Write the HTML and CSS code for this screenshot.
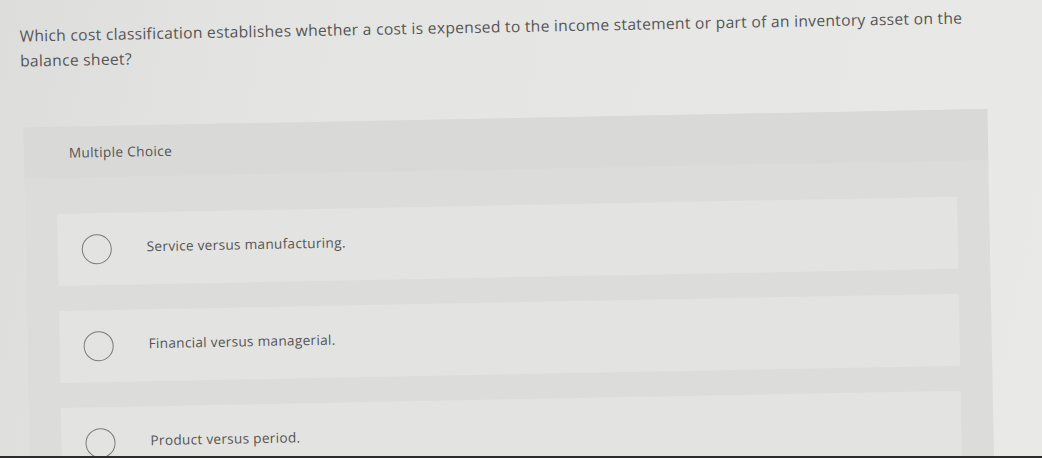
FILE: index.html
```html
<!DOCTYPE html>
<html lang="en">
<head>
<meta charset="utf-8">
<title>Multiple Choice</title>
<link rel="stylesheet" href="styles.css">
</head>
<body>
<div class="screen">
  <main class="sheet">
    <p class="question">Which cost classification establishes whether a cost is expensed to the income statement or part of an inventory asset on the balance sheet?</p>
    <section class="panel">
      <h2 class="panel-title">Multiple Choice</h2>
      <ul class="choices">
        <li class="choice"><span class="radio"></span><span class="label">Service versus manufacturing.</span></li>
        <li class="choice"><span class="radio"></span><span class="label">Financial versus managerial.</span></li>
        <li class="choice"><span class="radio"></span><span class="label">Product versus period.</span></li>
      </ul>
    </section>
  </main>
</div>
<div class="edge"></div>
</body>
</html>
```

FILE: styles.css
```css
html, body {
  margin: 0;
  padding: 0;
}

body {
  width: 1042px;
  height: 458px;
  overflow: hidden;
  background: #e5e5e3;
  font-family: "Open Sans", "Lato", sans-serif;
  display: flex;
  flex-direction: column;
}

.screen {
  flex: 1;
  overflow: hidden;
  background: linear-gradient(100deg, #dddddb 0%, #e4e4e2 25%, #e7e7e5 70%, #e9e9e7 100%);
}

.sheet {
  width: 1042px;
  padding: 24px 0 0 19px;
  box-sizing: border-box;
  transform: rotate(-1.1deg);
  transform-origin: 0 0;
}

.question {
  margin: 0;
  width: 965px;
  font-size: 15.6px;
  letter-spacing: 0.3px;
  line-height: 25px;
  color: #555555;
}

.panel {
  margin: 54px 0 0 2px;
  width: 964px;
  background: #dcdcda;
}

.panel-title {
  margin: 0;
  padding: 17px 0 16px 45px;
  font-size: 13.6px;
  letter-spacing: 0.35px;
  line-height: 18px;
  font-weight: 400;
  color: #555555;
  background: #d9d9d7;
}

.choices {
  list-style: none;
  margin: 0;
  padding: 36px 32px 0 32px;
  display: flex;
  flex-direction: column;
  gap: 25px;
}

.choice {
  height: 72px;
  flex: none;
  background: #e3e3e1;
  display: flex;
  align-items: center;
  padding-left: 24px;
}

.radio {
  width: 28px;
  height: 28px;
  border: 1.5px solid #7a7a7a;
  border-radius: 50%;
  flex: none;
}

.label {
  margin-left: 35px;
  margin-top: -5px;
  font-size: 13.6px;
  letter-spacing: 0.3px;
  color: #555555;
}

.edge {
  height: 2px;
  background: #2c2c2c;
  flex: none;
}
```
